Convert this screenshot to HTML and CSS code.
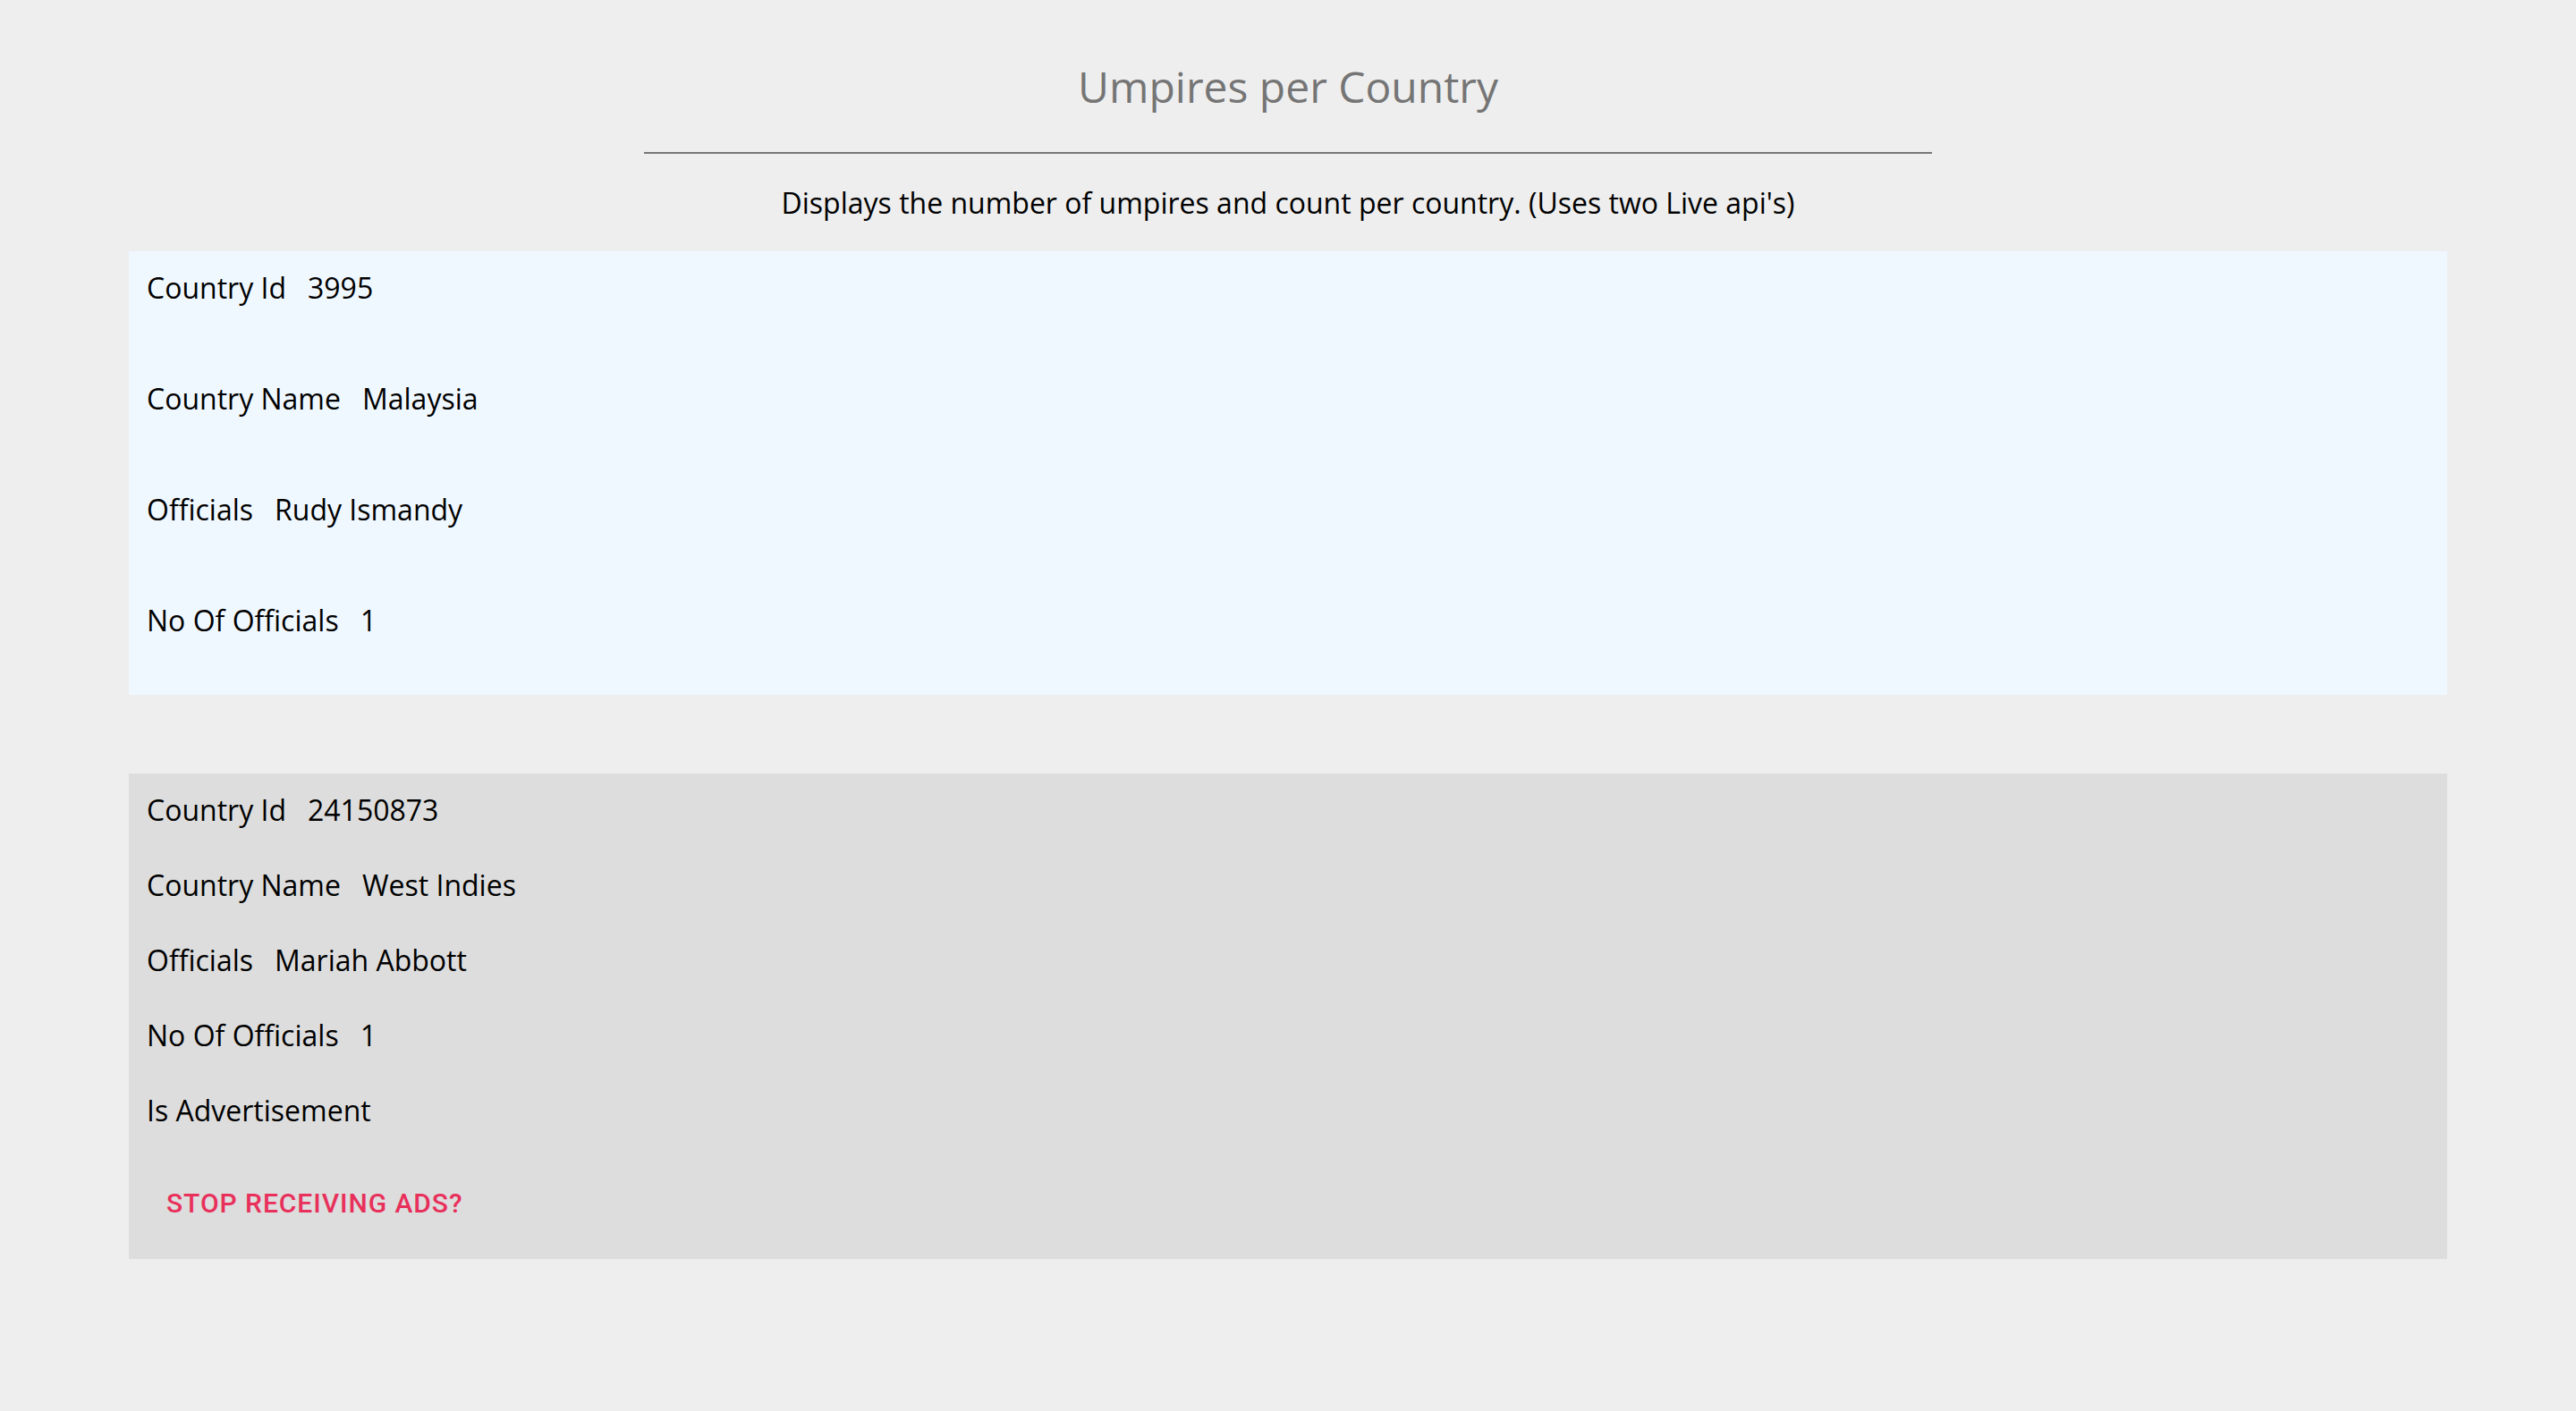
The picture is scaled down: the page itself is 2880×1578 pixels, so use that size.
FILE: index.html
```html
<!DOCTYPE html>
<html>
<head>
<meta charset="utf-8">
<link rel="stylesheet" href="styles.css">
</head>
<body>
<div class="page">
  <h1 class="title">Umpires per Country</h1>
  <hr class="rule">
  <p class="subtitle">Displays the number of umpires and count per country. (Uses two Live api's)</p>
  <div class="card card-blue">
    <div class="row"><span class="label">Country Id</span><span class="value">3995</span></div>
    <div class="row"><span class="label">Country Name</span><span class="value">Malaysia</span></div>
    <div class="row"><span class="label">Officials</span><span class="value">Rudy Ismandy</span></div>
    <div class="row"><span class="label">No Of Officials</span><span class="value">1</span></div>
  </div>
  <div class="card card-grey">
    <div class="row"><span class="label">Country Id</span><span class="value">24150873</span></div>
    <div class="row"><span class="label">Country Name</span><span class="value">West Indies</span></div>
    <div class="row"><span class="label">Officials</span><span class="value">Mariah Abbott</span></div>
    <div class="row"><span class="label">No Of Officials</span><span class="value">1</span></div>
    <div class="row"><span class="label">Is Advertisement</span></div>
    <button class="ad-button">Stop receiving ads?</button>
  </div>
</div>
</body>
</html>
```

FILE: styles.css
```css
html, body {
  margin: 0;
  padding: 0;
  background: #eeeeee;
}
body {
  font-family: "Open Sans", "Liberation Sans", sans-serif;
  color: #000;
  min-height: 1578px;
}
.page {
  display: flex;
  flex-direction: column;
  align-items: center;
  padding-top: 64px;
}
.title {
  margin: 0;
  font-size: 48px;
  font-weight: 400;
  color: #757575;
  line-height: 65px;
}
.rule {
  width: 50%;
  margin: 41px 0 0;
  border: 0;
  height: 2px;
  background: #777777;
}
.subtitle {
  margin: 33px 0 0;
  font-size: 32px;
  line-height: 44px;
}
.card {
  width: 90%;
  box-sizing: border-box;
  display: flex;
  flex-direction: column;
  align-items: flex-start;
  padding: 19px 20px 0;
}
.card-blue {
  margin-top: 32px;
  background: #f0f8ff;
  gap: 80px;
  height: 496px;
}
.card-grey {
  margin-top: 88px;
  background: #dddddd;
  gap: 40px;
  height: 543px;
}
.row {
  display: flex;
  gap: 24px;
  font-size: 32px;
  line-height: 44px;
}
.ad-button {
  margin-top: 5px;
  margin-left: 6px;
  height: 72px;
  padding: 0 16px;
  border: 0;
  background: transparent;
  font-family: Roboto, "Liberation Sans", sans-serif;
  font-weight: 500;
  font-size: 30px;
  letter-spacing: 0.95px;
  text-transform: uppercase;
  color: #e8305b;
}
```
